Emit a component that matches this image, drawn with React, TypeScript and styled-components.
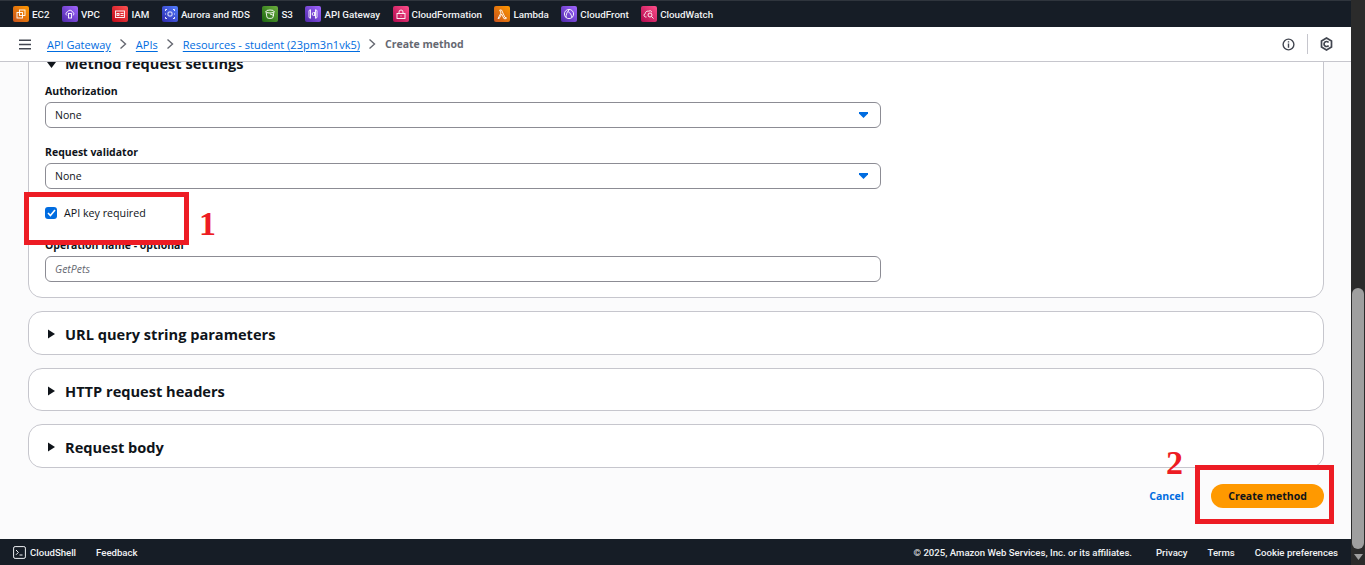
import React from "react";
import styled, { createGlobalStyle } from "styled-components";

const Global = createGlobalStyle`
  html, body { margin: 0; padding: 0; height: 565px; overflow: hidden; background: #2b2b2b; }
  #root { height: 565px; }
  * { box-sizing: border-box; }
`;

const font = `"Open Sans", "Noto Sans", "Liberation Sans", sans-serif`;
const chromeFont = `Roboto, "Open Sans", "Liberation Sans", sans-serif`;

const Shell = styled.div`
  display: flex;
  width: 1365px;
  height: 565px;
  position: relative;
  font-family: ${font};
  overflow: hidden;
`;
const Page = styled.div`
  flex: 1;
  min-width: 0;
  display: flex;
  flex-direction: column;
`;
const ServiceBar = styled.nav`
  height: 27px;
  flex: none;
  background: #161d26;
  border-top: 1px solid #2f353d;
  display: flex;
  align-items: center;
  padding-left: 13px;
  gap: 12.5px;
`;
const Service = styled.a`
  display: flex;
  align-items: center;
  gap: 3px;
  color: #f0f2f4;
  font-family: ${chromeFont};
  font-size: 9.8px;
  font-weight: 500;
  white-space: nowrap;
`;
const ServiceIcon = styled.span<{ $bg: string }>`
  width: 16px;
  height: 16px;
  border-radius: 2px;
  background: ${(p) => p.$bg};
  display: flex;
  align-items: center;
  justify-content: center;
  svg { display: block; }
`;
const Crumbs = styled.header`
  height: 35px;
  flex: none;
  background: #fff;
  border-bottom: 1px solid #c6c6cd;
  display: flex;
  align-items: center;
  padding: 0 18px 0 19px;
`;
const Menu = styled.span`
  display: flex;
  margin-right: 16px;
`;
const Crumb = styled.a`
  color: #006ce0;
  font-size: 11px;
  font-weight: 400;
  text-decoration: underline;
  text-underline-offset: 2px;
  white-space: nowrap;
`;
const Sep = styled.span`
  display: flex;
  margin: 0 8.5px;
`;
const Current = styled.span`
  color: #656871;
  font-size: 10.5px;
  font-weight: 700;
  white-space: nowrap;
`;
const HeaderTools = styled.div`
  margin-left: auto;
  display: flex;
  align-items: center;
`;
const ToolDivider = styled.span`
  width: 1px;
  height: 20px;
  background: #c6c6cd;
  margin: 0 12px;
`;
const Main = styled.main`
  flex: 1;
  min-height: 0;
  overflow: hidden;
  background: #fbfbfc;
  padding: 0 27px 0 28px;
`;
const Panel = styled.section<{ $height: number }>`
  height: ${(p) => p.$height}px;
  border: 1px solid #c6c6cd;
  background: #fff;
  border-radius: 14px;
  margin-bottom: 13px;
  display: flex;
  align-items: center;
  padding-left: 18px;
  gap: 9px;
`;
const OpenPanel = styled.section`
  margin-top: -14px;
  height: 250px;
  border: 1px solid #c6c6cd;
  background: #fff;
  border-radius: 14px;
  margin-bottom: 13px;
  padding: 0 16px;
`;
const PanelTitle = styled.h2`
  margin: 0;
  padding-top: 2px;
  color: #0f141a;
  font-size: 14.6px;
  font-weight: 700;
  line-height: 18px;
  white-space: nowrap;
`;
const OpenHead = styled.div`
  display: flex;
  align-items: center;
  gap: 9px;
  padding-left: 2px;
  height: 24px;
  margin-top: 1px;
`;
const Label = styled.label`
  display: block;
  color: #0f141a;
  font-size: 10.5px;
  font-weight: 700;
  line-height: 14px;
`;
const Field = styled.div<{ $top: number }>`
  margin-top: ${(p) => p.$top}px;
  width: 836px;
`;
const Control = styled.div`
  margin-top: 4px;
  height: 26px;
  border: 1px solid #8c8c94;
  border-radius: 6px;
  display: flex;
  align-items: center;
  justify-content: space-between;
  padding: 0 12px 0 9px;
  color: #0f141a;
  font-size: 10.5px;
  background: #fff;
`;
const Placeholder = styled.span`
  color: #656871;
  font-style: italic;
`;
const CheckRow = styled.div`
  margin-top: 16px;
  display: flex;
  align-items: center;
  gap: 7px;
  color: #0f141a;
  font-size: 10.7px;
  height: 16px;
`;
const Check = styled.span`
  width: 12px;
  height: 12px;
  border-radius: 3px;
  background: #006ce0;
  display: flex;
  align-items: center;
  justify-content: center;
`;
const Actions = styled.div`
  display: flex;
  justify-content: flex-end;
  align-items: center;
  gap: 27px;
  margin-top: 16px;
`;
const Cancel = styled.a`
  color: #006ce0;
  font-size: 10.5px;
  font-weight: 700;
`;
const Primary = styled.button`
  width: 113px;
  height: 24px;
  border: 0;
  border-radius: 12px;
  background: #ff9900;
  color: #0f141a;
  font-family: ${font};
  font-size: 10.5px;
  font-weight: 700;
  padding: 0;
`;
const Footer = styled.footer`
  height: 26px;
  flex: none;
  background: #161d26;
  display: flex;
  align-items: center;
  padding: 0 13px;
  color: #f0f2f4;
  font-family: ${chromeFont};
  font-size: 9.6px;
  font-weight: 500;
`;
const FootLeft = styled.span`
  display: flex;
  align-items: center;
  gap: 4px;
  margin-right: 20px;
`;
const FootRight = styled.div`
  margin-left: auto;
  display: flex;
  gap: 20px;
`;
const Copyright = styled.span`
  margin-right: 4px;
`;
const Scrollbar = styled.div`
  width: 14px;
  flex: none;
  background: #2b2b2b;
  display: flex;
  flex-direction: column;
  align-items: center;
`;
const Track = styled.div`
  flex: 1;
  width: 100%;
  padding: 0 1px;
  display: flex;
  flex-direction: column;
  justify-content: flex-end;
`;
const Thumb = styled.div`
  height: 261px;
  border-radius: 6px;
  background: #9f9f9f;
`;
const ArrowSlot = styled.div`
  height: 16px;
  display: flex;
  align-items: center;
  justify-content: center;
`;
const Callout = styled.div<{ $l: number; $t: number; $w: number; $h: number }>`
  position: absolute;
  left: ${(p) => p.$l}px;
  top: ${(p) => p.$t}px;
  width: ${(p) => p.$w}px;
  height: ${(p) => p.$h}px;
  border: 5px solid #ed1c24;
`;
const Num = styled.span<{ $l: number; $t: number }>`
  position: absolute;
  left: ${(p) => p.$l}px;
  top: ${(p) => p.$t}px;
  color: #ed1c24;
  font-family: "Liberation Serif", serif;
  font-size: 34px;
  font-weight: 700;
  line-height: 38px;
`;
const TriIcon = styled.svg<{ $drop: number }>`
  flex: none;
  margin-top: ${(p) => p.$drop}px;
`;

const g = (d: React.ReactNode) => (
  <svg width="12" height="12" viewBox="0 0 12 12" fill="none" stroke="#fff" strokeWidth="0.9">{d}</svg>
);
const services: [string, string, React.ReactNode][] = [
  ["EC2", "linear-gradient(45deg,#c8511b,#ff9900)", g(<><rect x="2" y="4.5" width="5.5" height="5.5" /><rect x="4.5" y="2" width="5.5" height="5.5" /></>)],
  ["VPC", "linear-gradient(45deg,#4d27a8,#a166ff)", g(<><path d="M3 7.5a2 2 0 0 1 .6-3.7 2.6 2.6 0 0 1 4.9.3 1.8 1.8 0 0 1 .3 3.4" /><rect x="4.5" y="5.5" width="3" height="4.5" /></>)],
  ["IAM", "linear-gradient(45deg,#bd0816,#ff5252)", g(<><rect x="1.5" y="3" width="9" height="6.5" /><rect x="3" y="5.5" width="2" height="2" /><path d="M6.5 5.5h3M6.5 7.5h3" /></>)],
  ["Aurora and RDS", "linear-gradient(45deg,#2e27ad,#527fff)", g(<><rect x="4" y="4" width="4" height="4" rx="1" /><path d="M1.5 3V1.5H3M9 1.5h1.5V3M10.5 9v1.5H9M3 10.5H1.5V9M1.5 5.5v1M10.5 5.5v1" /></>)],
  ["S3", "linear-gradient(45deg,#1b660f,#6cae3e)", g(<><ellipse cx="6" cy="3.5" rx="4" ry="1.5" /><path d="M2 3.5l1 6c.4 1.2 5.6 1.2 6 0l1-6M6 6l4 1.5" /></>)],
  ["API Gateway", "linear-gradient(45deg,#4d27a8,#a166ff)", g(<><path d="M2 2.5v7l1.5.8v-8.6zM10 2.5v7l-1.5.8v-8.6zM6.5 4l-1.5 2 1.5 2M7.5 4v4" /></>)],
  ["CloudFormation", "linear-gradient(45deg,#b0084d,#ff4f8b)", g(<><rect x="2" y="5.5" width="8" height="5" /><path d="M4 5.5V4a2 2 0 0 1 4 0v1.5M5.5 8h1" /></>)],
  ["Lambda", "linear-gradient(45deg,#c8511b,#ff9900)", g(<path d="M2 10.5l3-5.5-1.3-3H5.5l3.5 7.5h1.2v1.2H8L5.6 6 3.2 10.5z" />)],
  ["CloudFront", "linear-gradient(45deg,#4d27a8,#a166ff)", g(<><circle cx="6" cy="6" r="4.6" /><path d="M3 9.5c0-3 1-6 3.5-8M5 3.5c2 1 3.5 3.5 4 6" /></>)],
  ["CloudWatch", "linear-gradient(45deg,#b0084d,#ff4f8b)", g(<><path d="M3.5 9H2.6a1.8 1.8 0 0 1-.3-3.5 2.4 2.4 0 0 1 3-2.3 2.6 2.6 0 0 1 3.7 1" /><circle cx="7" cy="7" r="2" /><path d="M8.5 8.5l2 2" /></>)],
];

const Tri = ({ open }: { open?: boolean }) => (
  <TriIcon width="9" height="10" viewBox="0 0 9 10" fill="#0f141a" $drop={open ? 6 : 2}>
    {open ? <path d="M0 2h9L4.5 8z" /> : <path d="M1 0.5l7 4.5-7 4.5z" />}
  </TriIcon>
);
const Caret = () => (
  <svg width="9" height="6" viewBox="0 0 9 6" fill="#006ce0"><path d="M0 0h9v1.5L4.5 6 0 1.5z" /></svg>
);
const Chevron = () => (
  <svg width="8" height="12" viewBox="0 0 8 12" fill="none" stroke="#656871" strokeWidth="1.4"><path d="M1.5 1.5L6.5 6l-5 4.5" /></svg>
);

export default function App() {
  return (
    <Shell>
      <Global />
      <Page>
        <ServiceBar>
          {services.map(([name, bg, icon]) => (
            <Service key={name}>
              <ServiceIcon $bg={bg}>{icon}</ServiceIcon>
              {name}
            </Service>
          ))}
        </ServiceBar>
        <Crumbs>
          <Menu>
            <svg width="12" height="11" viewBox="0 0 12 11" stroke="#424650" strokeWidth="1.6"><path d="M0 1.2h12M0 5.5h12M0 9.8h12" /></svg>
          </Menu>
          <Crumb>API Gateway</Crumb>
          <Sep><Chevron /></Sep>
          <Crumb>APIs</Crumb>
          <Sep><Chevron /></Sep>
          <Crumb>Resources - student (23pm3n1vk5)</Crumb>
          <Sep><Chevron /></Sep>
          <Current>Create method</Current>
          <HeaderTools>
            <svg width="13" height="13" viewBox="0 0 14 14" fill="none" stroke="#424650" strokeWidth="1.5"><circle cx="7" cy="7" r="5.8" /><path d="M7 3.6v1.2M7 6v4.4" /></svg>
            <ToolDivider />
            <svg width="13" height="14" viewBox="0 0 13 14" fill="none" stroke="#424650" strokeWidth="1.7"><path d="M6.5 1l5 3v6l-5 3-5-3V4z" /><path d="M8.6 5.6A2.5 2.5 0 1 0 8.6 8.4" /></svg>
          </HeaderTools>
        </Crumbs>
        <Main>
          <OpenPanel>
            <OpenHead>
              <Tri open />
              <PanelTitle>Method request settings</PanelTitle>
            </OpenHead>
            <Field $top={10}>
              <Label>Authorization</Label>
              <Control>None<Caret /></Control>
            </Field>
            <Field $top={17}>
              <Label>Request validator</Label>
              <Control>None<Caret /></Control>
            </Field>
            <CheckRow>
              <Check>
                <svg width="9" height="8" viewBox="0 0 9 8" fill="none" stroke="#fff" strokeWidth="1.6"><path d="M1 4l2.4 2.5L8 1" /></svg>
              </Check>
              API key required
            </CheckRow>
            <Field $top={17}>
              <Label>Operation name - optional</Label>
              <Control><Placeholder>GetPets</Placeholder></Control>
            </Field>
          </OpenPanel>
          <Panel $height={44}><Tri /><PanelTitle>URL query string parameters</PanelTitle></Panel>
          <Panel $height={43}><Tri /><PanelTitle>HTTP request headers</PanelTitle></Panel>
          <Panel $height={44}><Tri /><PanelTitle>Request body</PanelTitle></Panel>
          <Actions>
            <Cancel>Cancel</Cancel>
            <Primary>Create method</Primary>
          </Actions>
        </Main>
        <Footer>
          <FootLeft>
            <svg width="13" height="13" viewBox="0 0 13 13" fill="none" stroke="#f0f2f4" strokeWidth="1"><rect x="0.6" y="0.6" width="11.8" height="11.8" rx="1.5" /><path d="M3 4l2.4 2.4L3 8.8M6.5 9h3" /></svg>
            CloudShell
          </FootLeft>
          <span>Feedback</span>
          <FootRight>
            <Copyright>© 2025, Amazon Web Services, Inc. or its affiliates.</Copyright>
            <span>Privacy</span>
            <span>Terms</span>
            <span>Cookie preferences</span>
          </FootRight>
        </Footer>
      </Page>
      <Scrollbar>
        <Track><Thumb /></Track>
        <ArrowSlot>
          <svg width="9" height="6" viewBox="0 0 9 6" fill="#9f9f9f"><path d="M0 0h9L4.5 6z" /></svg>
        </ArrowSlot>
      </Scrollbar>
      <Callout $l={24} $t={192} $w={165} $h={53} />
      <Num $l={199} $t={205}>1</Num>
      <Callout $l={1195} $t={465} $w={139} $h={59} />
      <Num $l={1166} $t={444}>2</Num>
    </Shell>
  );
}
